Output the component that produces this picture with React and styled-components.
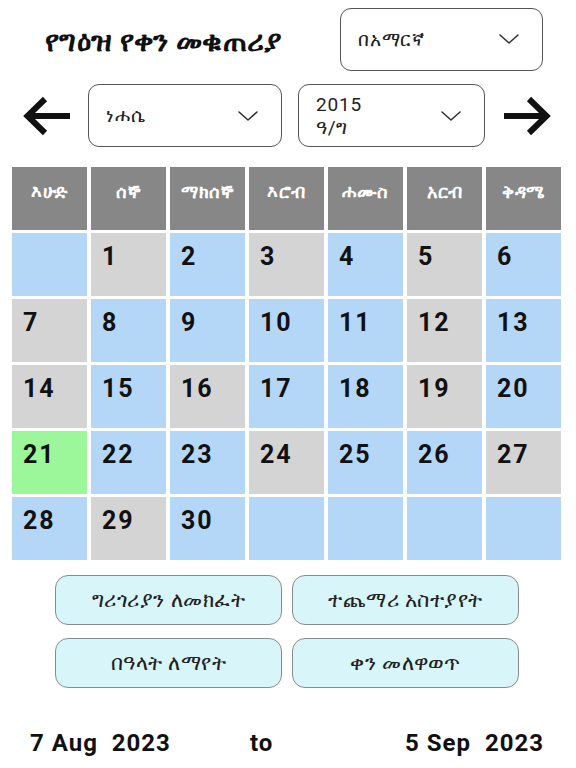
import React from "react"
import styled, { createGlobalStyle } from "styled-components"

const GlobalStyle = createGlobalStyle`
  html, body {
    margin: 0;
    padding: 0;
    background: #ffffff;
  }
  body {
    font-family: Roboto, "Noto Sans", "DejaVu Sans", sans-serif;
    color: #111;
  }
`

const weekDays = ["እሁድ", "ሰኞ", "ማክሰኞ", "እሮብ", "ሐሙስ", "አርብ", "ቅዳሜ"]

// tone: b = blue, g = grey, t = today (green)
const weeks = [
  [["", "b"], [1, "g"], [2, "b"], [3, "g"], [4, "b"], [5, "g"], [6, "b"]],
  [[7, "g"], [8, "b"], [9, "b"], [10, "b"], [11, "b"], [12, "g"], [13, "b"]],
  [[14, "g"], [15, "b"], [16, "g"], [17, "b"], [18, "b"], [19, "g"], [20, "b"]],
  [[21, "t"], [22, "b"], [23, "b"], [24, "g"], [25, "b"], [26, "b"], [27, "g"]],
  [[28, "b"], [29, "g"], [30, "b"], ["", "b"], ["", "b"], ["", "b"], ["", "b"]],
]

const tones = {
  b: "#b4d7f8",
  g: "#d4d4d4",
  t: "#9bf79a",
}

const Chevron = () => (
  <svg width="22" height="12" viewBox="0 0 22 12" fill="none">
    <path d="M2 2 L11 10 L20 2" stroke="#333" strokeWidth="1.6" strokeLinecap="round" strokeLinejoin="round" />
  </svg>
)

const Arrow = ({ dir }) => (
  <svg width="50" height="40" viewBox="0 0 50 40" fill="none">
    {dir === "left" ? (
      <path d="M47 20 H6 M22 3 L4.5 20 L22 37" stroke="#111" strokeWidth="6" strokeLinejoin="miter" />
    ) : (
      <path d="M3 20 H44 M28 3 L45.5 20 L28 37" stroke="#111" strokeWidth="6" strokeLinejoin="miter" />
    )}
  </svg>
)

const Select = ({ width, children }) => (
  <SelectBox $width={width}>
    <SelectText>{children}</SelectText>
    <Chevron />
  </SelectBox>
)

const App = () => {
  return (
    <>
      <GlobalStyle />
      <Page>
        <Header>
          <Title>የግዕዝ የቀን መቁጠሪያ</Title>
          <Select width={203}>በአማርኛ</Select>
        </Header>

        <NavRow>
          <ArrowButton>
            <Arrow dir="left" />
          </ArrowButton>
          <Select width={194}>ነሐሴ</Select>
          <Select width={187}>
            2015
            <br />
            ዓ/ግ
          </Select>
          <ArrowButton>
            <Arrow dir="right" />
          </ArrowButton>
        </NavRow>

        <Calendar>
          {weekDays.map(d => (
            <DayHead key={d}>{d}</DayHead>
          ))}
          {weeks.flat().map(([n, tone], i) => (
            <DayCell key={i} $tone={tone}>
              {n}
            </DayCell>
          ))}
        </Calendar>

        <Actions>
          <ActionButton>ግሪጎሪያን ለመክፈት</ActionButton>
          <ActionButton>ተጨማሪ አስተያየት</ActionButton>
          <ActionButton>በዓላት ለማየት</ActionButton>
          <ActionButton>ቀን መለዋወጥ</ActionButton>
        </Actions>

        <Footer>
          <RangeText>7 Aug  2023</RangeText>
          <RangeText>to</RangeText>
          <RangeText>5 Sep  2023</RangeText>
        </Footer>
      </Page>
    </>
  )
}

const Page = styled.div`
  width: 576px;
  height: 768px;
  overflow: hidden;
  display: flex;
  flex-direction: column;
`

const Header = styled.div`
  display: flex;
  align-items: center;
  justify-content: space-between;
  padding: 8px 33px 0 45px;
  height: 62px;
`

const Title = styled.h1`
  margin: 4px 0 0;
  font-size: 29px;
  font-weight: 700;
  letter-spacing: 0.3px;
  color: #111;
`

const SelectBox = styled.div`
  box-sizing: border-box;
  width: ${props => props.$width}px;
  height: 63px;
  border: 1.3px solid #555;
  border-radius: 11px;
  display: flex;
  align-items: center;
  justify-content: space-between;
  padding: 0 22px 0 17px;
`

const SelectText = styled.div`
  font-size: 19px;
  line-height: 23px;
  letter-spacing: 0.8px;
  color: #222;
`

const NavRow = styled.div`
  display: flex;
  align-items: center;
  margin-top: 14px;
  padding: 0 0 0 23px;
  gap: 16px;
`

const ArrowButton = styled.div`
  width: 50px;
  height: 40px;
  display: flex;
  align-items: center;
  justify-content: center;
  margin-right: -1px;
`

const Calendar = styled.div`
  display: grid;
  grid-template-columns: repeat(7, 75px);
  grid-auto-rows: 63px;
  gap: 3px 4px;
  margin: 20px 0 0 12px;
`

const DayHead = styled.div`
  background: #878787;
  color: #fff;
  font-size: 18px;
  font-weight: 700;
  letter-spacing: 0.5px;
  display: flex;
  justify-content: center;
  padding-top: 14px;
  box-sizing: border-box;
`

const DayCell = styled.div`
  background: ${props => tones[props.$tone]};
  font-size: 25px;
  font-weight: 700;
  letter-spacing: 2px;
  color: #111;
  padding: 9px 0 0 11px;
  box-sizing: border-box;
`

const Actions = styled.div`
  display: grid;
  grid-template-columns: repeat(2, 227px);
  grid-auto-rows: 50px;
  gap: 13px 10px;
  margin: 15px 0 0 55px;
`

const ActionButton = styled.div`
  background: #d8f6fa;
  border: 1.3px solid #8a8a8a;
  border-radius: 13px;
  display: flex;
  align-items: center;
  justify-content: center;
  font-size: 21px;
  letter-spacing: 0.5px;
  color: #222;
`

const Footer = styled.div`
  display: grid;
  grid-template-columns: 220px 155px auto;
  align-items: center;
  padding-left: 30px;
  margin-top: 41px;
`

const RangeText = styled.span`
  font-size: 24px;
  font-weight: 700;
  letter-spacing: 1px;
  white-space: pre;
  color: #111;
`

export default App
